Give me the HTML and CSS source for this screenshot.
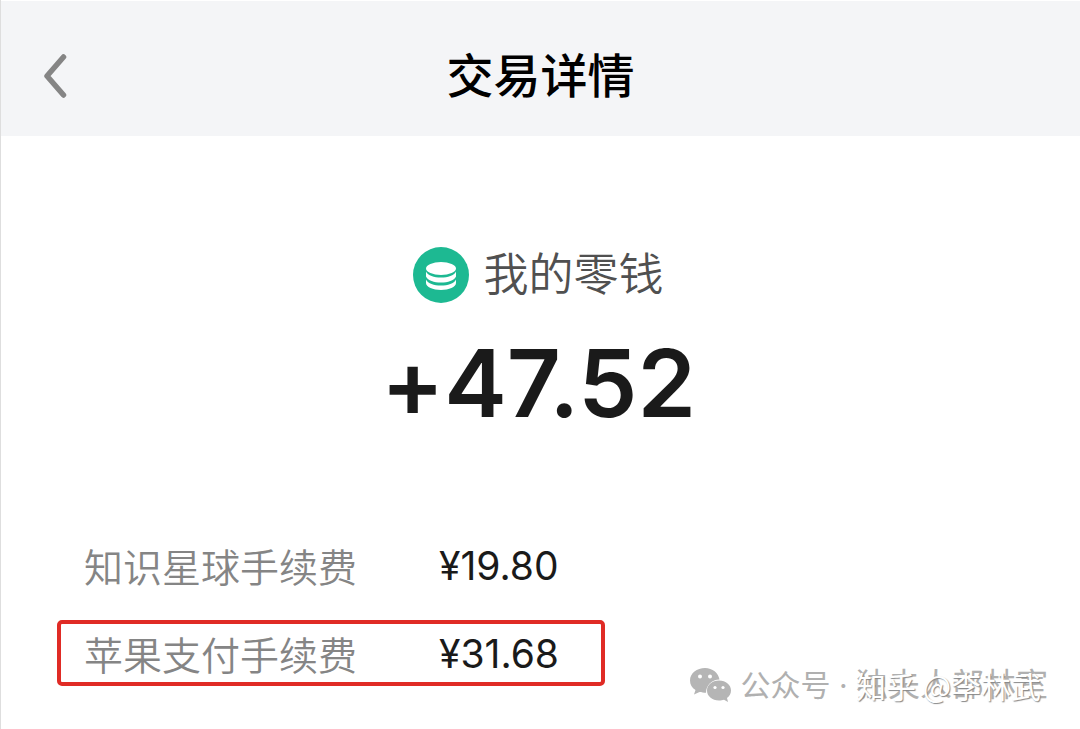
FILE: index.html
```html
<!DOCTYPE html>
<html lang="zh-CN">
<head>
<meta charset="utf-8">
<meta name="viewport" content="width=device-width, initial-scale=1">
<title>交易详情</title>
<link rel="stylesheet" href="styles.css">
</head>
<body>
<header class="navbar">
  <button class="back" type="button" aria-label="返回">
    <svg width="24" height="46" viewBox="0 0 24 46" aria-hidden="true"><path d="M20.500 4 4 23 20.500 42" fill="none" stroke="#858585" stroke-width="5.500" stroke-linecap="round" stroke-linejoin="round"/></svg>
  </button>
  <h1 class="title">交易详情</h1>
</header>
<main class="content">
  <section class="summary">
    <div class="account">
      <svg class="coin" viewBox="0 0 56 56" aria-hidden="true">
        <circle cx="28" cy="28" r="28" fill="#1db992"/>
        <g fill="#fff">
          <ellipse cx="28" cy="21.500" rx="15" ry="6.500"/>
          <path d="M13 24.500c2 4 8 6 15 6s13-2 15-6v5c-2 4-8 6-15 6s-13-2-15-6z"/>
          <path d="M13 32.500c2 4 8 6 15 6s13-2 15-6v3.500c0 4-7 7-15 7s-15-3-15-7z"/>
        </g>
      </svg>
      <span>我的零钱</span>
    </div>
    <p class="amount">+47.52</p>
  </section>
  <dl class="fees">
    <div class="fee"><dt>知识星球手续费</dt><dd>¥19.80</dd></div>
    <div class="fee marked"><dt>苹果支付手续费</dt><dd>¥31.68</dd></div>
  </dl>
</main>
<div class="watermark">
  <svg class="wechat" viewBox="0 0 42 34" aria-hidden="true">
    <path fill="#b5b5b5" d="M15 0C7 0 0 5 0 12.500c0 4 2 7.500 5.500 9.500L4 26.500l5.500-2.500c2 .6 4 .8 6.500.8C16 17 22 11.500 29.500 11.500 28.500 5 22.500 0 15 0z"/>
    <path fill="#b5b5b5" d="M29 12.500c-7 0-12 4.500-12 10s5 10 12 10c2 0 3.500-.3 5-.8l4 2.300-1-4c2.500-2 4-4.500 4-7.500 0-5.500-5-10-12-10z"/>
    <g fill="#fff"><circle cx="10" cy="8.500" r="2"/><circle cx="20" cy="8.500" r="2"/><circle cx="25" cy="19.500" r="1.600"/><circle cx="33" cy="19.500" r="1.600"/></g>
  </svg>
  <span>公众号 · </span>
  <span class="names">独夫人部林室<span class="overlay">知乎 @李林武</span></span>
</div>
</body>
</html>
```

FILE: styles.css
```css
* { box-sizing: border-box; }
body {
  margin: 0;
  min-height: 100vh;
  position: relative;
  background: #fff;
  border-left: 1px solid #dedede;
  font-family: Inter, "Noto Sans CJK SC", sans-serif;
  color: #1a1a1a;
}
.navbar {
  display: grid;
  grid-template-columns: 1fr auto 1fr;
  align-items: center;
  height: 136px;
  padding: 14px 42px 0;
  background: #f4f5f7;
  border-top: 1px solid #fff;
}
.back {
  justify-self: start;
  display: flex;
  padding: 0;
  border: 0;
  background: none;
}
.title {
  margin: 0;
  font-size: 47px;
  line-height: 64px;
  font-weight: 500;
  color: #000;
}
.content { padding: 109px 56px 0; }
.summary { padding-right: 4px; text-align: center; }
.account {
  display: flex;
  justify-content: center;
  align-items: center;
  gap: 14px;
  font-size: 45px;
  line-height: 60px;
  font-weight: 350;
  color: #505050;
}
.coin { width: 56px; height: 56px; }
.amount {
  margin: 22px 0 0;
  font-size: 94px;
  line-height: 112px;
  font-weight: 600;
  font-feature-settings: "calt" 0;
}
.fees {
  display: grid;
  gap: 22px;
  width: max-content;
  margin: 93px 0 0;
}
.fee {
  display: flex;
  align-items: center;
  gap: 82px;
  height: 66px;
  padding: 0 42px 0 23px;
  border: 4px solid transparent;
  border-radius: 5px;
  font-size: 39px;
}
.marked { border-color: #e02b25; }
.fee dt { color: #858585; font-weight: 350; }
.fee dd { margin: 0; }
.watermark {
  position: absolute;
  right: 32px;
  bottom: 22px;
  display: flex;
  align-items: center;
  font-size: 30px;
  line-height: 44px;
  color: #b0b0b0;
  white-space: pre;
}
.wechat { width: 42px; margin-right: 8px; }
.names { position: relative; font-size: 32px; }
.overlay {
  position: absolute;
  left: 0;
  top: 0;
  font-family: "Noto Sans CJK SC", sans-serif;
  font-size: 30px;
  color: #fff;
  text-shadow: 1px 1px 1px #888;
}
```
